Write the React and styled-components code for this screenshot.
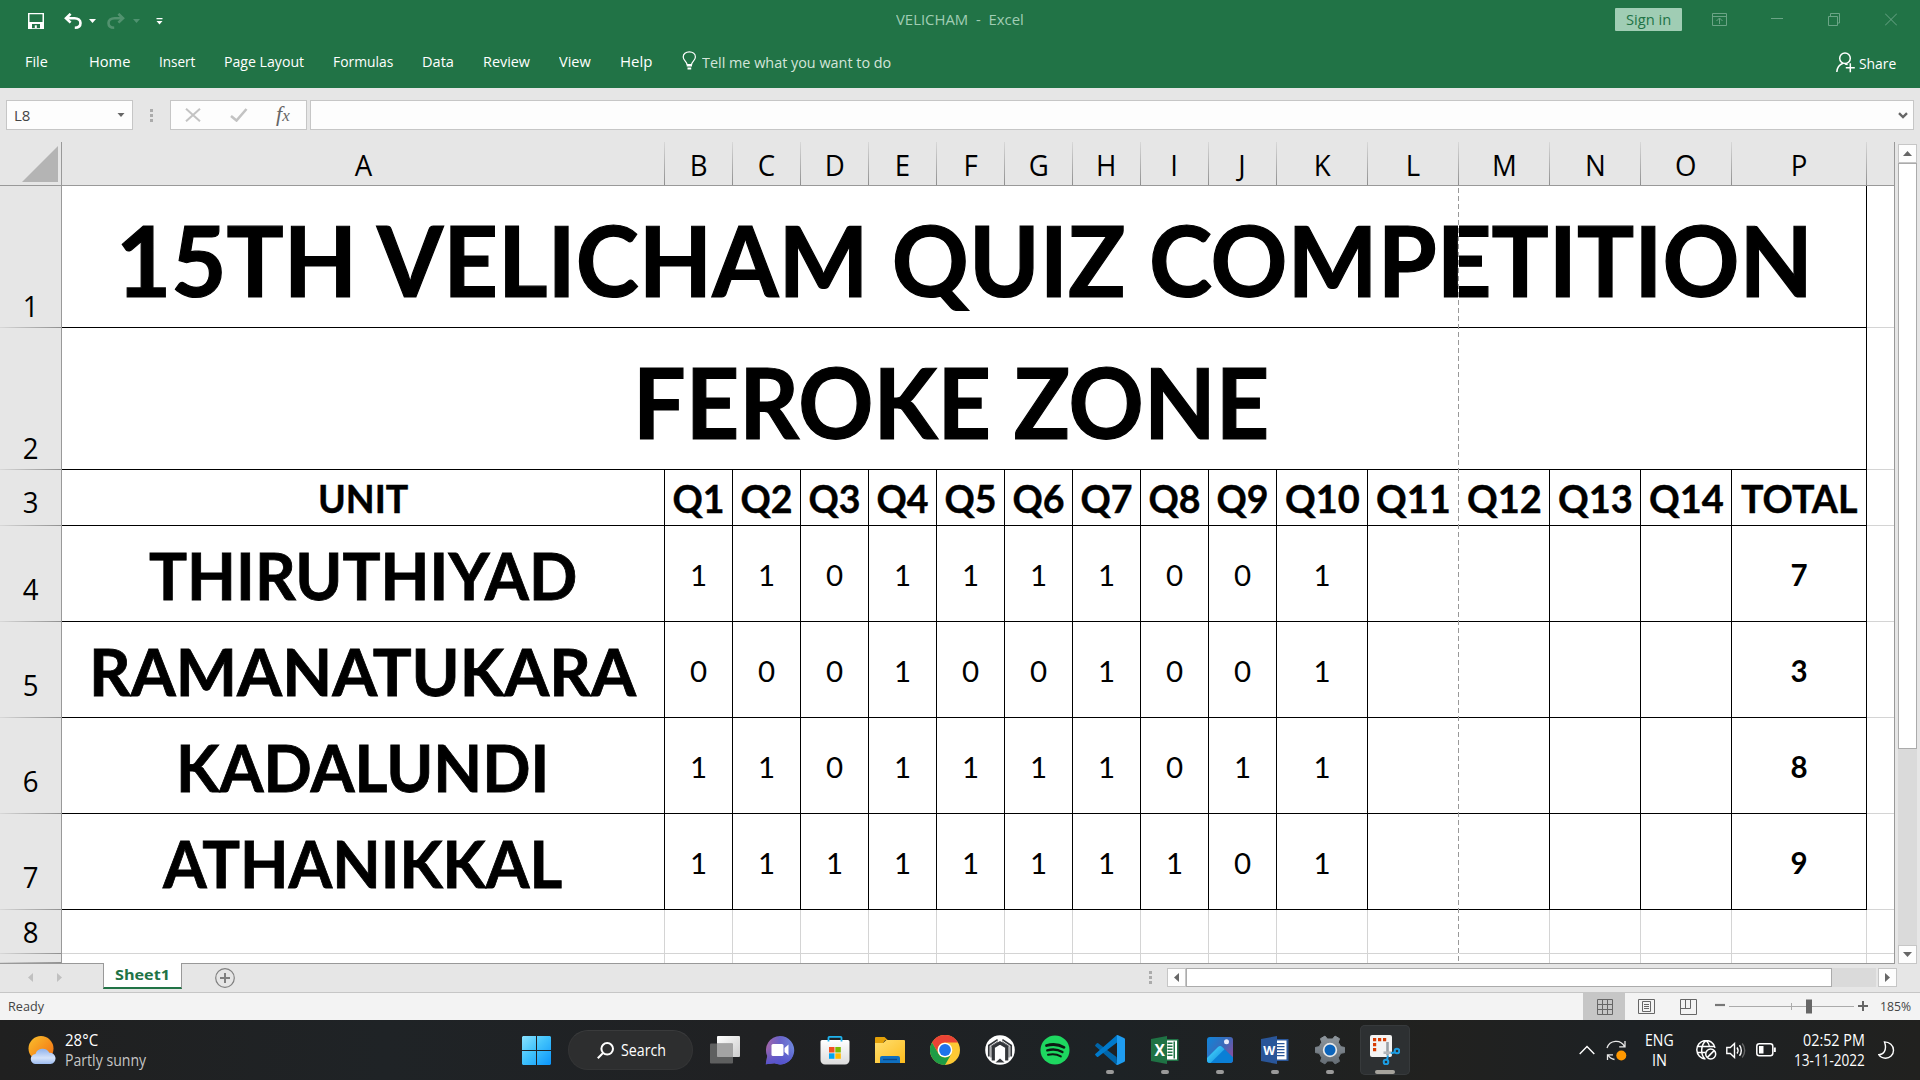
import React, { useLayoutEffect, useRef, useState } from 'react';
import styled, { createGlobalStyle, css } from 'styled-components';

const Global = createGlobalStyle`
  *, *::before, *::after { box-sizing: border-box; }
  html, body { margin: 0; padding: 0; }
  body { width: 1920px; height: 1080px; overflow: hidden; background: #e6e6e6; }
  svg { display: block; flex: none; }
`;

const UI = '"Open Sans", "Noto Sans", sans-serif';
const SHEET = 'Lato, "Open Sans", sans-serif';

/* ---------- text that keeps a fixed measure ---------- */

const FitBox = styled.span`
  display: block;
  flex: none;
  width: ${p => p.$w}px;
  white-space: pre;
`;
const FitInner = styled.span`
  display: inline-block;
  transform-origin: 0 50%;
`;
function Fit({ w, children }) {
  const ref = useRef(null);
  const [scale, setScale] = useState(1);
  useLayoutEffect(() => {
    setScale(w / ref.current.offsetWidth);
  }, [w, children]);
  return (
    <FitBox $w={w}>
      <FitInner ref={ref} style={{ transform: `scaleX(${scale})` }}>{children}</FitInner>
    </FitBox>
  );
}

/* ---------- window ---------- */

const Screen = styled.div`
  width: 1920px;
  height: 1080px;
  display: flex;
  flex-direction: column;
  background: #e6e6e6;
  font-family: ${UI};
  font-size: 15px;
  overflow: hidden;
`;

const GreenArea = styled.header`
  height: 88px;
  background: #217346;
  display: flex;
  flex-direction: column;
  color: #fff;
`;
const TitleBar = styled.div`
  height: 39px;
  display: flex;
  align-items: center;
  padding: 0 23px 0 28px;
`;
const QuickAccess = styled.div`
  width: 868px;
  height: 16px;
  margin-top: 3px;
  display: flex;
  align-items: center;
`;
const Gap = styled.i`
  flex: 0 0 ${p => p.$w}px;
`;
const DocTitle = styled.div`
  color: #a0cdb4;
  line-height: 20px;
  padding-bottom: 1px;
  flex: 1;
`;
const SignIn = styled.button`
  width: 67px;
  height: 23px;
  border: 0;
  border-radius: 1px;
  background: #a0cdb4;
  color: #217346;
  font: 15px/20px ${UI};
  padding: 0 11px 1px;
  display: flex;
  align-items: center;
  margin-right: 30px;
`;
const WindowButtons = styled.div`
  display: flex;
  align-items: center;
  color: #6ba486;
`;
const TabRow = styled.nav`
  height: 49px;
  display: flex;
  align-items: flex-start;
  padding: 11px 24px 0 25px;
  line-height: 22px;
`;
const Tab = styled.a`
  margin-right: ${p => p.$after || 29}px;
`;
const TellMe = styled.div`
  display: flex;
  color: #d3e5da;
  gap: 5px;
  flex: 1;
  padding-top: 1px;
`;
const Share = styled.div`
  display: flex;
  gap: 4px;
  padding-top: 2px;
  line-height: 22px;
`;

/* ---------- formula bar ---------- */

const FormulaBar = styled.div`
  height: 54px;
  padding: 12px 6px 0;
  display: flex;
  align-items: flex-start;
`;
const Field = styled.div`
  width: ${p => p.$w}px;
  height: 30px;
  background: #fdfdfd;
  border: 1px solid #c6c6c6;
  display: flex;
  align-items: center;
  color: #444;
  padding: 0 7px;
  justify-content: space-between;
`;
const FormulaButtons = styled(Field)`
  padding: 0 13px 0 14px;
`;
const FormulaInput = styled(Field)`
  justify-content: flex-end;
  padding: 0 5px;
`;
const FxMark = styled.span`
  font: italic 22px/24px "Liberation Serif", serif;
  color: #666;
  width: 17px;
  white-space: nowrap;
  small { font-size: 17px; }
`;
const Grip = styled.div`
  width: 37px;
  height: 30px;
  display: flex;
  flex-direction: column;
  align-items: center;
  justify-content: center;
  gap: 2px;
  i { width: 3px; height: 3px; background: #ababab; }
`;

/* ---------- grid ---------- */

const Middle = styled.div`
  display: flex;
  height: 822px;
`;
const Grid = styled.div`
  position: relative;
  width: 1895px;
  height: 822px;
  border-right: 1px solid #999;
  border-bottom: 1px solid #999;
  display: grid;
  grid-template-columns: 62px 603px repeat(9, 68px) repeat(5, 91px) 135px 27px;
  grid-template-rows: 44px 142px 142px 56px repeat(4, 96px) 44px 9px;
  background: #fff;
`;
const headBase = css`
  background-color: #e6e6e6;
  font-family: ${UI};
  font-size: 30px;
  line-height: 30px;
  color: #000;
  display: flex;
  justify-content: center;
`;
const Corner = styled.div`
  background: #e6e6e6;
  border-bottom: 1px solid #999;
  border-right: 1px solid #999;
  display: flex;
  align-items: flex-end;
  justify-content: flex-end;
  padding: 0 3px 3px 0;
`;
const ColHead = styled.div`
  ${headBase}
  align-items: center;
  padding: 2px 1px 0 0;
  border-bottom: 1px solid #999;
  background-image: linear-gradient(#d8d8d8, #8f8f8f);
  background-size: ${p => (p.$last ? 0 : 1)}px 100%;
  background-position: right top;
  background-repeat: no-repeat;
`;
const RowHead = styled.div`
  ${headBase}
  align-items: flex-end;
  padding: 0 0 ${p => p.$drop}px 0;
  border-right: 1px solid #999;
  background-image: linear-gradient(90deg, #d8d8d8, #8f8f8f);
  background-size: 100% 1px;
  background-position: left bottom;
  background-repeat: no-repeat;
`;
const Narrow = styled.span`
  display: inline-block;
  transform: scaleX(0.92);
`;
const Cell = styled.div`
  grid-column: span ${p => p.$span || 1};
  border-right: 1px solid ${p => (p.$open ? 'transparent' : p.$line || '#000')};
  border-bottom: 1px solid ${p => p.$line || '#000'};
  display: flex;
  align-items: center;
  justify-content: center;
  font-family: ${SHEET};
  font-weight: ${p => (p.$bold ? 700 : 400)};
  font-size: ${p => p.$fs || 30}px;
  line-height: 1;
  color: #000;
  padding-top: ${p => p.$top || 0}px;
  padding-right: ${p => p.$right || 0}px;
  -webkit-text-stroke: ${p => p.$stroke || 0}px #000;
`;
const LastCell = styled.div`
  border-right: 1px solid ${p => (p.$open ? 'transparent' : '#d4d4d4')};
`;
const Edge = styled.div`
  border-bottom: 1px solid #d4d4d4;
`;
const PageBreak = styled.div`
  position: absolute;
  left: 1458px;
  top: 44px;
  bottom: 0;
  width: 1px;
  background: repeating-linear-gradient(#fff 0 2px, #999 2px 7px, #fff 7px 8px);
`;

const VScroll = styled.div`
  width: 19px;
  margin: 2px 0 0 3px;
  height: 820px;
  background: #dadada;
  display: flex;
  flex-direction: column;
`;
const ScrollButton = styled.div`
  width: 19px;
  height: 19px;
  flex: none;
  background: #fdfdfd;
  border: 1px solid #c6c6c6;
  display: flex;
  align-items: center;
  justify-content: center;
`;
const VThumb = styled.div`
  height: 586px;
  background: #fff;
  border: 1px solid #ababab;
  margin-bottom: auto;
`;

/* ---------- sheet tabs ---------- */

const SheetBar = styled.div`
  height: 29px;
  border-bottom: 1px solid #c6c6c6;
  display: flex;
  align-items: flex-start;
  padding-left: 28px;
`;
const SheetNav = styled.div`
  width: 75px;
  height: 27px;
  display: flex;
  gap: 24px;
  align-items: center;
`;
const SheetTab = styled.div`
  width: 79px;
  height: 26px;
  margin-top: -1px;
  position: relative;
  background: #fff;
  border: solid #999;
  border-width: 0 1px;
  border-bottom: 2px solid #217346;
  color: #217346;
  font-weight: 700;
  line-height: 22px;
  padding-left: 11px;
`;
const AddSheet = styled.div`
  margin: 4px 914px 0 33px;
`;
const GripSmall = styled(Grip)`
  width: 3px;
  height: 27px;
  margin-right: 15px;
`;
const HScroll = styled.div`
  margin-top: 4px;
  display: flex;
  width: 730px;
  height: 19px;
`;
const HThumb = styled.div`
  width: 646px;
  background: #fff;
  border: 1px solid #ababab;
`;
const HTrack = styled.div`
  width: 44px;
  margin-right: 2px;
  background: #dadada;
`;

/* ---------- status bar ---------- */

const StatusBar = styled.div`
  height: 27px;
  background: #f3f3f3;
  display: flex;
  align-items: center;
  font-size: 13px;
  color: #444;
  padding: 0 9px 0 8px;
`;
const Ready = styled.div`
  flex: 1;
  padding-bottom: 2px;
`;
const Zoom = styled.div`
  padding-bottom: 1px;
`;
const ViewButton = styled.div`
  width: 42px;
  height: 27px;
  display: flex;
  align-items: center;
  justify-content: center;
  padding-left: ${p => (p.$on ? 1 : 0)}px;
  background: ${p => (p.$on ? '#c6c6c6' : 'transparent')};
`;

/* ---------- taskbar ---------- */

const Taskbar = styled.footer`
  height: 60px;
  background: linear-gradient(90deg, #202020, #1f2326 20%, #202123 40%, #1d2225 58%, #21211f 75%, #1d2124 85%, #21211f);
  color: #fff;
  display: flex;
  align-items: center;
  font-size: 15.5px;
  line-height: 20px;
`;
const Weather = styled.div`
  width: 522px;
  padding-left: 28px;
  display: flex;
  align-items: center;
  gap: 9px;
  color: #c6c6c6;
`;
const White = styled.div`
  color: #fff;
`;
const SearchPill = styled.div`
  width: 125px;
  height: 40px;
  border-radius: 20px;
  background: #2d2e2f;
  border: 1px solid #343536;
  border-top-color: #3a3b3c;
  margin: 0 4px 0 17px;
  padding-left: 28px;
  display: flex;
  align-items: center;
  gap: 7px;
`;
const AppSlot = styled.div`
  width: ${p => (p.$active ? 50 : 55)}px;
  margin-left: ${p => (p.$active ? 3 : 0)}px;
  height: 50px;
  border-radius: 5px;
  background: ${p => (p.$active ? '#2d3032' : 'transparent')};
  box-shadow: ${p => (p.$active ? 'inset 0 0 0 1px #373a3c' : 'none')};
  display: flex;
  flex-direction: column;
  align-items: center;
  padding-top: 10px;
  &::after {
    content: '';
    width: ${p => p.$bar || 0}px;
    height: 4px;
    border-radius: 2px;
    background: ${p => (p.$active ? '#a6a39c' : '#9a9a9a')};
    margin-top: 5px;
  }
`;
const Tray = styled.div`
  margin-left: auto;
  display: flex;
  align-items: center;
  padding-right: 25px;
`;
const TrayText = styled.div`
  display: flex;
  flex-direction: column;
  align-items: ${p => p.$align || 'center'};
  margin: 0 ${p => p.$r}px 0 ${p => p.$l}px;
`;

/* ---------- icons ---------- */

const Caret = ({ c = '#fff', w = 7, h = 4 }) => (
  <svg width={w} height={h} viewBox="0 0 7 4"><path d="M0 0h7L3.5 4z" fill={c} /></svg>
);
const SaveIcon = () => (
  <svg width="16" height="16" viewBox="0 0 16 16">
    <path fillRule="evenodd" fill="#fff" d="M0 0h16v16H0zM1.5 1.3v7.7h13V1.3z" />
    <path d="M4 11h8v4.2H4z" fill="#217346" />
    <path d="M6.8 12.3h2V15h-2z" fill="#fff" />
  </svg>
);
const Undo = ({ flip }) => (
  <svg width="18" height="16" viewBox="0 0 18 16" opacity={flip ? 0.22 : 1}>
    <g transform={flip ? 'translate(18 0) scale(-1 1)' : undefined} fill="none" stroke="#fff" strokeWidth="2.6">
      <path d="M6.6.8 2 5.2l4.6 4.4" />
      <path d="M2 5.2h8.5c3.5 0 6 2 6 4.8s-2.2 4.7-5.7 4.7" />
    </g>
  </svg>
);
const RibbonIcon = () => (
  <svg width="15" height="13" viewBox="0 0 15 13" fill="none" stroke="currentColor">
    <path d="M.5.5h14v12H.5zM.5 3.5h14M7.5 11V5.3M4.5 8l3-3 3 3" />
  </svg>
);
const Bulb = () => (
  <svg width="15" height="20" viewBox="0 0 15 20" fill="none" stroke="#fff" strokeWidth="1.2">
    <path d="M5 13.5c0-3-3.8-4-3.8-7.5C1.2 3 3.8.8 7.3.8s6.1 2.2 6.1 5.2c0 3.5-3.8 4.5-3.8 7.5z" />
    <path d="M4.7 14.5h5.3M5.5 17.5h3.7" strokeWidth="1.8" />
  </svg>
);
const PersonPlus = () => (
  <svg width="19" height="21" viewBox="0 0 19 21" fill="none" stroke="#fff" strokeWidth="1.5">
    <circle cx="9" cy="6.2" r="5.3" />
    <path d="M.8 20c.3-4.5 2.8-7.5 6.2-8.8M9 12c1 0 1.8.2 2.6.6M14.3 11.2v9M9.8 15.7h9" />
  </svg>
);
const CornerTri = () => (
  <svg width="36" height="36" viewBox="0 0 36 36"><path d="M36 0v36H0z" fill="#b4b4b4" /></svg>
);
const Tri = ({ dir, c = '#666', l = 9, s = 5 }) => {
  const horiz = dir === 'left' || dir === 'right';
  const w = horiz ? s : l;
  const h = horiz ? l : s;
  const d = {
    left: `M${w} 0v${h}L0 ${h / 2}z`,
    right: `M0 0v${h}L${w} ${h / 2}z`,
    up: `M0 ${h}h${w}L${w / 2} 0z`,
    down: `M0 0h${w}L${w / 2} ${h}z`,
  }[dir];
  return <svg width={w} height={h}><path d={d} fill={c} /></svg>;
};

const WeatherIcon = () => (
  <svg width="28" height="28" viewBox="0 0 28 28">
    <defs>
      <linearGradient id="sun" x1="0" y1="0" x2="1" y2="1"><stop offset="0" stopColor="#f9c02d" /><stop offset="1" stopColor="#f26a10" /></linearGradient>
      <linearGradient id="cloud" x1="0" y1="0" x2="0" y2="1"><stop offset="0" stopColor="#8fb2ec" /><stop offset=".6" stopColor="#d5e3fa" /><stop offset="1" stopColor="#9dbcf0" /></linearGradient>
    </defs>
    <circle cx="13" cy="12.5" r="12.5" fill="url(#sun)" />
    <path d="M8 28a5 5 0 0 1-.5-10 7.500 7.500 0 0 1 13.800-1.200A5.600 5.600 0 0 1 22.500 28z" fill="url(#cloud)" />
  </svg>
);
const StartIcon = () => (
  <svg width="29" height="29" viewBox="0 0 29 29">
    <defs><linearGradient id="win" x1="0" y1="0" x2="1" y2="1"><stop offset="0" stopColor="#8ae2ff" /><stop offset=".45" stopColor="#42c3fb" /><stop offset="1" stopColor="#0a94fb" /></linearGradient></defs>
    <path d="M1 0h13v14H0V1zM15 0h13l1 1v13H15zM0 15h14v14H1l-1-1zM15 15h14v13l-1 1H15z" fill="url(#win)" />
  </svg>
);
const SearchIcon = () => (
  <svg width="17" height="17" viewBox="0 0 17 17" fill="none" stroke="#fff" strokeWidth="2"><circle cx="10.2" cy="6.8" r="5.8" /><path d="M6 11 .8 16.2" /></svg>
);
const TaskView = () => (
  <svg width="30" height="30" viewBox="0 0 30 30">
    <defs><linearGradient id="tv" x1="0" y1="0" x2="1" y2="1"><stop offset="0" stopColor="#fff" /><stop offset="1" stopColor="#ccc" /></linearGradient></defs>
    <rect x="7" y="1" width="23" height="21" rx="1" fill="url(#tv)" />
    <rect x="0" y="8.5" width="23" height="20" rx="1" fill="#6a6a6a" opacity=".85" />
    <path d="M7 8.5h15a1 1 0 0 1 1 1V22H8a1 1 0 0 1-1-1z" fill="#a3a3a3" />
  </svg>
);
const Chat = () => (
  <svg width="30" height="30" viewBox="0 0 30 30">
    <defs>
      <linearGradient id="chat" x1="0" y1=".2" x2="1" y2=".2"><stop offset="0" stopColor="#a364a8" /><stop offset=".5" stopColor="#6a63c9" /><stop offset="1" stopColor="#6d86dd" /></linearGradient>
      <linearGradient id="chatShade" x1="0" y1="0" x2="0" y2="1"><stop offset=".4" stopColor="#5558cc" stopOpacity="0" /><stop offset="1" stopColor="#5452ce" /></linearGradient>
    </defs>
    <path d="M15 1a14.200 14.200 0 1 1-5.500 27.300L.8 29.200 2.200 21A14.200 14.200 0 0 1 15 1z" fill="url(#chat)" />
    <path d="M15 1a14.200 14.200 0 1 1-5.500 27.300L.8 29.200 2.200 21A14.200 14.200 0 0 1 15 1z" fill="url(#chatShade)" />
    <rect x="6.5" y="9" width="12" height="12" rx="1.5" fill="#fff" /><path d="M19.500 13 23.500 9.500v11l-4-3.500z" fill="#fff" />
  </svg>
);
const Store = () => (
  <svg width="30" height="30" viewBox="0 0 30 30">
    <defs><linearGradient id="st" x1="0" y1="0" x2="0" y2="1"><stop offset="0" stopColor="#fff" /><stop offset="1" stopColor="#dcdcdc" /></linearGradient></defs>
    <path d="M.5 6.500a1.500 1.500 0 0 1 1.500-1.500h26a1.500 1.500 0 0 1 1.500 1.500V25a4.500 4.500 0 0 1-4.500 4.500H5A4.500 4.500 0 0 1 .5 25z" fill="url(#st)" />
    <path d="M8.500 6.500V2.600a.8.8 0 0 1 .8-.8h11.400a.8.8 0 0 1 .8.8v3.900" fill="none" stroke="#1fb4ee" strokeWidth="1.8" />
    <path d="M9 12h5.500v5.500H9z" fill="#f25022" /><path d="M15.300 12h5.500v5.500h-5.500z" fill="#7fba00" />
    <path d="M9 18.300h5.500v5.500H9z" fill="#00a4ef" /><path d="M15.300 18.300h5.500v5.500h-5.500z" fill="#ffb900" />
  </svg>
);
const Explorer = () => (
  <svg width="30" height="30" viewBox="0 0 30 30">
    <defs><linearGradient id="fo" x1="0" y1="0" x2="1" y2="1"><stop offset="0" stopColor="#ffdf70" /><stop offset="1" stopColor="#fdbb1c" /></linearGradient></defs>
    <path d="M0 3a1 1 0 0 1 1-1h8.500l3.500 3.200h-3L8 8H0z" fill="#e3a008" />
    <path d="M0 8h8l3.500-3H29a1 1 0 0 1 1 1v22H0z" fill="url(#fo)" />
    <path d="M5 28v-5a2 2 0 0 1 2-2h16a2 2 0 0 1 2 2v5z" fill="#0f6fc0" /><path d="M8 24.500h14" stroke="#0a4788" strokeWidth="1.3" />
  </svg>
);
const Chrome = () => (
  <svg width="30" height="30" viewBox="0 0 30 30">
    <circle cx="15" cy="15" r="15" fill="#fcc934" />
    <path d="M2 7.500A15 15 0 0 1 28 7.500H15a7.500 7.500 0 0 0-6.500 11.200z" fill="#ea4335" />
    <path d="M2 7.500A15 15 0 0 0 15 30l6.500-11.300A7.500 7.500 0 0 1 8.500 18.700z" fill="#1e9c45" />
    <circle cx="15" cy="15" r="7.3" fill="#fff" /><circle cx="15" cy="15" r="5.9" fill="#1f73eb" />
  </svg>
);
const NLogo = () => (
  <svg width="30" height="30" viewBox="0 0 30 30">
    <circle cx="15" cy="15" r="14.8" fill="#fff" />
    <g fill="none" stroke="#33363a">
      <path d="M3.800 21.500v-11L12.600 4.600M26.200 21.500v-11L17.400 4.600" strokeWidth="1.700" />
      <path d="M8.300 25.500V12L15 7.800 21.700 12v13.500" strokeWidth="3.200" />
      <path d="M6 22.500V11.300L13 6.800M24 22.500V11.300L17 6.800" strokeWidth=".8" />
    </g>
    <path d="M10.500 27.500 15 23.500l4.500 4z" fill="#33363a" />
  </svg>
);
const Spotify = () => (
  <svg width="30" height="30" viewBox="0 0 30 30">
    <circle cx="15" cy="15" r="14.5" fill="#1ed760" />
    <g fill="none" stroke="#0c1a12" strokeLinecap="round">
      <path d="M6.500 10.500c6-1.700 12.500-1.100 17.500 1.900" strokeWidth="2.8" /><path d="M7.300 15.300c5.200-1.500 10.700-.9 15.100 1.800" strokeWidth="2.4" /><path d="M8 19.800c4.500-1.200 9-.7 12.800 1.600" strokeWidth="2" />
    </g>
  </svg>
);
const VSCode = () => (
  <svg width="30" height="30" viewBox="0 0 30 30">
    <path d="M22.500 30 21.500 22 3.200 8.200a1 1 0 0 0-1.300.1L.5 9.700a1 1 0 0 0 0 1.500L21 29.500z" fill="#0065a9" />
    <path d="M22 0 .5 18.800a1 1 0 0 0 0 1.500l1.400 1.400a1 1 0 0 0 1.300 0L22 7.500z" fill="#007acc" />
    <path d="M21.800.3 22.600 0l6.400 3a1.700 1.700 0 0 1 1 1.600v20.800a1.700 1.700 0 0 1-1 1.600l-6.400 3-1.600-.7L22 28V2z" fill="#1f9cf0" />
  </svg>
);
const OfficeText = styled.text`
  font: 700 ${p => p.$fs}px ${UI};
  fill: #fff;
`;
const ExcelIcon = () => (
  <svg width="30" height="30" viewBox="0 0 30 30">
    <rect x="14" y="4" width="14.5" height="22" rx=".5" fill="#217346" /><path d="M15 5.500h12v19H15z" fill="#fff" />
    <g fill="#217346"><path d="M17.500 7.500h5V9h-5zM17.500 10.500h5V12h-5zM17.500 13.500h5V15h-5zM17.500 16.500h5V18h-5zM17.500 19.500h5V21h-5zM23.500 6.500h1.500v17h-1.500z" /></g>
    <path d="M1 4 17 1v28L1 26z" fill="#1f7244" /><OfficeText x="4.6" y="20.5" $fs="15.5" textLength="9">X</OfficeText>
  </svg>
);
const WordIcon = () => (
  <svg width="30" height="30" viewBox="0 0 30 30">
    <rect x="14" y="4" width="14.5" height="22" rx=".5" fill="#2b579a" /><path d="M15 5.500h11.500v19H15z" fill="#fff" />
    <g fill="#2b579a"><path d="M16 8h8.500v1.300H16zM16 11h8.500v1.300H16zM16 14h8.500v1.300H16zM16 17h8.500v1.300H16zM16 20h8.500v1.300H16z" /></g>
    <path d="M1 4 17 1v28L1 26z" fill="#2a5699" /><OfficeText x="3.2" y="20.3" $fs="13" textLength="12" lengthAdjust="spacingAndGlyphs">W</OfficeText>
  </svg>
);
const Photos = () => (
  <svg width="30" height="30" viewBox="0 0 30 30">
    <defs>
      <linearGradient id="ph" x1="0" y1="0" x2="1" y2=".7"><stop offset="0" stopColor="#0f86da" /><stop offset=".6" stopColor="#3d68b8" /><stop offset="1" stopColor="#8a4fa0" /></linearGradient>
      <linearGradient id="pm" x1="0" y1="0" x2="1" y2="1"><stop offset="0" stopColor="#4fe0ff" /><stop offset="1" stopColor="#0a84dd" /></linearGradient>
      <clipPath id="pc"><rect x="2" y="2" width="26" height="26" rx="3" /></clipPath>
    </defs>
    <g clipPath="url(#pc)">
      <rect x="2" y="2" width="26" height="26" fill="url(#ph)" />
      <path d="M2 23 13 12a3 3 0 0 1 4.200 0L30 24v5H2z" fill="#0a7fd6" />
      <path d="M2 23 13 12a3 3 0 0 1 4.200 0l2.300 2.300L5.500 28H2z" fill="url(#pm)" />
      <circle cx="21.500" cy="6.800" r="2.500" fill="#e8ecfa" />
    </g>
  </svg>
);

/* six teeth: two corners on the outer radius, two on the inner one */
const GEAR = (() => {
  const pts = [];
  for (let i = 0; i < 6; i += 1) {
    [[-10, 14.8], [10, 14.8], [17, 11.3], [43, 11.3]].forEach(([deg, r]) => {
      const a = ((i * 60 + deg) * Math.PI) / 180;
      pts.push(`${(15 + r * Math.cos(a)).toFixed(2)} ${(15 + r * Math.sin(a)).toFixed(2)}`);
    });
  }
  return `M${pts.join('L')}z`;
})();
const Settings = () => (
  <svg width="30" height="30" viewBox="0 0 30 30">
    <defs><linearGradient id="ge" x1="0" y1="0" x2="0" y2="1"><stop offset="0" stopColor="#8e969d" /><stop offset="1" stopColor="#656d75" /></linearGradient></defs>
    <path d={GEAR} fill="url(#ge)" stroke="url(#ge)" strokeWidth="1" strokeLinejoin="round" />
    <circle cx="15" cy="15" r="7.2" fill="#e9e9e9" /><circle cx="15" cy="15" r="5.5" fill="#0c64bb" />
  </svg>
);
const Snip = () => (
  <svg width="30" height="30" viewBox="0 0 30 30">
    <rect x="0" y="0" width="22" height="22" rx="2" fill="#f3f3f3" />
    <path d="M3 3h3.200v3.200H3zM8 3h3.200v3.200H8zM13 3h3.200v3.200H13zM3 8h3.200v3.200H3zM3 13h3.200v3.200H3z" fill="#d83b01" />
    <path d="M17.500 7v13.500" stroke="#9aa0a6" strokeWidth="2.600" /><path d="M13.500 17.700h8.500" stroke="#b3b7bb" strokeWidth="2.600" />
    <g fill="none" stroke="#1c9de3" strokeWidth="2"><circle cx="27" cy="16" r="2.300" /><circle cx="16" cy="27" r="2.300" /><path d="M21 18.200l4-1M17 24.700l1-4.200" /></g>
  </svg>
);
const APPS = [
  [TaskView, 0], [Chat, 0], [Store, 0], [Explorer, 0], [Chrome, 0], [NLogo, 0], [Spotify, 0],
  [VSCode, 8], [ExcelIcon, 8], [Photos, 8], [WordIcon, 8], [Settings, 8],
];

const TrayChevron = () => (
  <svg width="16" height="10" viewBox="0 0 16 10" fill="none" stroke="#fff" strokeWidth="1.4"><path d="M.7 9 8 1.500 15.300 9" /></svg>
);
const Sync = () => (
  <svg width="21" height="21" viewBox="0 0 21 21" fill="none" stroke="#e8e8e8" strokeWidth="1.3">
    <path d="M1 8A9.500 9.500 0 0 1 18.500 6.500M19 1v5.800h-5.800M8.500 19.500A9 9 0 0 1 2 14.800M1.500 20v-5.200H7" /><circle cx="15.3" cy="15.5" r="5" fill="#ff9800" stroke="none" />
  </svg>
);
const Globe = () => (
  <svg width="21" height="20" viewBox="0 0 21 20" fill="none" stroke="#fff" strokeWidth="1.5">
    <path d="M19 7.800A9.200 9.200 0 1 0 9.500 18.900M1.500 6.500h17M1 12.500h8.500M9.800.8C4.500 5 4.500 14.500 8.800 18.700M10.200.8c2 1.700 3.300 4 3.500 6.500" />
    <circle cx="14.7" cy="14" r="5" /><path d="M11.400 17.400l6.700-6.800" />
  </svg>
);
const Speaker = () => (
  <svg width="20" height="17" viewBox="0 0 20 17" fill="none" stroke="#fff" strokeWidth="1.4">
    <path d="M.8 5.500h3.500L8.500 1.500v14L4.300 11.500H.8z" /><path d="M11 5.500c1.300 1.800 1.300 4.200 0 6M13.500 3.300c2.400 3 2.400 7.400 0 10.400" /><path d="M16.200 1.500c3.300 4 3.300 10 0 14" stroke="#666" />
  </svg>
);
const Battery = () => (
  <svg width="20" height="14" viewBox="0 0 20 14" fill="none" stroke="#fff" strokeWidth="1.5"><rect x=".8" y=".8" width="16" height="12" rx="2.5" /><path d="M18.800 4.500v4.500" strokeWidth="2" /><path d="M3 3h4.500v7.500H3z" fill="#fff" stroke="none" /></svg>
);
const Moon = () => (
  <svg width="17" height="18" viewBox="0 0 17 18" fill="none" stroke="#fff" strokeWidth="1.4"><path d="M6.500.9c5 0 9 3.500 9 8.300s-3.700 8-8 8c-3 0-5.300-1.300-6.700-3.500C5 13.800 9.500 9.500 6.500.9z" /></svg>
);

/* ---------- data ---------- */

const TABS = [['File', 23, 41], ['Home', 41], ['Insert', 36], ['Page Layout', 80], ['Formulas', 60], ['Data', 32], ['Review', 47], ['View', 32], ['Help', 32, 30]];
const COLS = 'ABCDEFGHIJKLMNOP'.split('');
const UNITS = [
  ['THIRUTHIYAD', 428, '1101111001', '7'],
  ['RAMANATUKARA', 547, '0001001001', '3'],
  ['KADALUNDI', 373, '1101111011', '8'],
  ['ATHANIKKAL', 399, '1111111101', '9'],
];

export default function App() {
  return (
    <Screen>
      <Global />
      <GreenArea>
        <TitleBar>
          <QuickAccess>
            <SaveIcon /><Gap $w={20} /><Undo /><Gap $w={7} /><Caret /><Gap $w={11} />
            <Undo flip /><Gap $w={8} /><Caret c="#4f9270" /><Gap $w={16} />
            <svg width="7" height="7" viewBox="0 0 7 7"><path d="M.5 0h6v1.200h-6zM.5 3h6L3.500 6.500z" fill="#fff" /></svg>
          </QuickAccess>
          <DocTitle><Fit w={128}>VELICHAM  -  Excel</Fit></DocTitle>
          <SignIn><Fit w={45}>Sign in</Fit></SignIn>
          <WindowButtons>
            <RibbonIcon /><Gap $w={44} />
            <svg width="12" height="13"><path d="M0 5.500h12" stroke="currentColor" /></svg><Gap $w={45} />
            <svg width="12" height="13" fill="none" stroke="currentColor"><path d="M.5 3.500h9v9h-9zM2.500 3V.5h9v9.500H10" /></svg><Gap $w={45} />
            <svg width="12" height="13" fill="none" stroke="currentColor"><path d="M0 .5l12 12M12 .5l-12 12" /></svg>
          </WindowButtons>
        </TitleBar>
        <TabRow>
          {TABS.map(([t, w, a]) => <Tab key={t} $after={a}><Fit w={w}>{t}</Fit></Tab>)}
          <TellMe><Bulb /><Fit w={189}>Tell me what you want to do</Fit></TellMe>
          <Share><PersonPlus /><Fit w={37}>Share</Fit></Share>
        </TabRow>
      </GreenArea>

      <FormulaBar>
        <Field $w={127}><Fit w={16}>L8</Fit><Caret c="#666" w={8} h={4} /></Field>
        <Grip><i /><i /><i /></Grip>
        <FormulaButtons $w={137}>
          <svg width="16" height="14" viewBox="0 0 16 14"><path d="M1 .8l14 12.500M15 .8L1 13.300" stroke="#c3c3c3" strokeWidth="2" /></svg>
          <svg width="18" height="14" viewBox="0 0 18 14"><path d="M1 8l5.500 4.500L16.500 1" fill="none" stroke="#c3c3c3" strokeWidth="2.6" /></svg>
          <FxMark>f<small>x</small></FxMark>
        </FormulaButtons>
        <Gap $w={3} />
        <FormulaInput $w={1604}>
          <svg width="10" height="7" viewBox="0 0 10 7"><path d="M1 1.200l4 3.800 4-3.800" fill="none" stroke="#666" strokeWidth="2.4" /></svg>
        </FormulaInput>
      </FormulaBar>

      <Middle>
        <Grid>
          <Corner><CornerTri /></Corner>
          {COLS.map(c => <ColHead key={c}><Narrow>{c}</Narrow></ColHead>)}
          <ColHead $last />

          <RowHead $drop={7}><Narrow>1</Narrow></RowHead>
          <Cell $span={16} $bold $fs={98} $top={4} $stroke={1.2}><Fit w={1697}>15TH VELICHAM QUIZ COMPETITION</Fit></Cell>
          <Edge />

          <RowHead $drop={7}><Narrow>2</Narrow></RowHead>
          <Cell $span={16} $bold $fs={98} $top={4} $right={26} $stroke={1.2}><Fit w={636}>FEROKE ZONE</Fit></Cell>
          <Edge />

          <RowHead $drop={9}><Narrow>3</Narrow></RowHead>
          <Cell $bold $fs={37.5} $top={3} $stroke={0.4}><Fit w={90}>UNIT</Fit></Cell>
          {Array.from({ length: 14 }, (_, i) => (
            <Cell key={i} $bold $fs={37.5} $top={3} $stroke={0.4} $open={i === 10}><Fit w={i < 9 ? 52 : 75}>{`Q${i + 1}`}</Fit></Cell>
          ))}
          <Cell $bold $fs={37.5} $top={3} $stroke={0.4}><Fit w={116}>TOTAL</Fit></Cell>
          <Edge />

          {UNITS.map(([name, w, marks, total], r) => (
            <React.Fragment key={name}>
              <RowHead $drop={18}><Narrow>{r + 4}</Narrow></RowHead>
              <Cell $bold $fs={65} $top={4} $right={1} $stroke={0.8}><Fit w={w}>{name}</Fit></Cell>
              {Array.from({ length: 14 }, (_, i) => (
                <Cell key={i} $fs={29.5} $top={2} $open={i === 10}>{marks[i] || ''}</Cell>
              ))}
              <Cell $bold $fs={29.5} $top={2}>{total}</Cell>
              <Edge />
            </React.Fragment>
          ))}

          <RowHead $drop={7}><Narrow>8</Narrow></RowHead>
          {COLS.map((c, i) => <Cell key={c} $line="#d4d4d4" $open={i === 11} />)}
          <Edge />
          <RowHead $drop={0} />
          {COLS.map((c, i) => <LastCell key={c} $open={i === 11} />)}
          <PageBreak />
        </Grid>
        <VScroll>
          <ScrollButton><Tri dir="up" /></ScrollButton>
          <VThumb />
          <ScrollButton><Tri dir="down" /></ScrollButton>
        </VScroll>
      </Middle>

      <SheetBar>
        <SheetNav><Tri dir="left" c="#c0c0c0" /><Tri dir="right" c="#c0c0c0" /></SheetNav>
        <SheetTab><Fit w={55}>Sheet1</Fit></SheetTab>
        <AddSheet>
          <svg width="20" height="20" viewBox="0 0 20 20" fill="none" stroke="#808080"><circle cx="10" cy="10" r="9.3" strokeWidth="1.2" /><path d="M10 5v10M5 10h10" strokeWidth="2" /></svg>
        </AddSheet>
        <GripSmall><i /><i /><i /></GripSmall>
        <HScroll>
          <ScrollButton><Tri dir="left" /></ScrollButton>
          <HThumb />
          <HTrack />
          <ScrollButton><Tri dir="right" /></ScrollButton>
        </HScroll>
      </SheetBar>

      <StatusBar>
        <Ready><Fit w={36}>Ready</Fit></Ready>
        <ViewButton $on>
          <svg width="16" height="16" fill="none" stroke="#666"><path d="M.5.5h15v15H.5zM.5 5.500h15M.5 10.500h15M5.500.5v15M10.500.5v15" /></svg>
        </ViewButton>
        <ViewButton>
          <svg width="17" height="15" fill="none" stroke="#666"><path d="M.5.5h16v14H.5zM4.500 2.500h8v10h-8zM6 5.500h5M6 7.500h5M6 9.500h5" /></svg>
        </ViewButton>
        <ViewButton>
          <svg width="17" height="16" fill="none" stroke="#666"><path d="M.5.5h16v15H.5zM.5 9.500h10V.5M5.500.5v9" /></svg>
        </ViewButton>
        <Gap $w={6} />
        <svg width="10" height="15"><path d="M0 6h10" stroke="#777" strokeWidth="2.2" /></svg>
        <Gap $w={4} />
        <svg width="125" height="15"><path d="M0 7.500h125" stroke="#ababab" /><path d="M62.500 4v7" stroke="#ababab" /><path d="M77 .5h6v14h-6z" fill="#666" /></svg>
        <Gap $w={4} />
        <svg width="10" height="15"><path d="M0 7h10M5 2v10" stroke="#666" strokeWidth="2" /></svg>
        <Gap $w={12} />
        <Zoom><Fit w={31}>185%</Fit></Zoom>
      </StatusBar>

      <Taskbar>
        <Weather>
          <WeatherIcon />
          <div><White><Fit w={33}>28°C</Fit></White><Fit w={81}>Partly sunny</Fit></div>
        </Weather>
        <StartIcon />
        <SearchPill><SearchIcon /><Fit w={45}>Search</Fit></SearchPill>
        {APPS.map(([Icon, bar], i) => <AppSlot key={i} $bar={bar}><Icon /></AppSlot>)}
        <AppSlot $active $bar={20}><Snip /></AppSlot>
        <Tray>
          <TrayChevron /><Gap $w={11} /><Sync />
          <TrayText $l={18} $r={22}><Fit w={29}>ENG</Fit><Fit w={15}>IN</Fit></TrayText>
          <Globe /><Gap $w={9} /><Speaker /><Gap $w={10} /><Battery />
          <TrayText $l={18} $r={13} $align="flex-end"><Fit w={62}>02:52 PM</Fit><Fit w={71}>13-11-2022</Fit></TrayText>
          <Moon />
        </Tray>
      </Taskbar>
    </Screen>
  );
}
